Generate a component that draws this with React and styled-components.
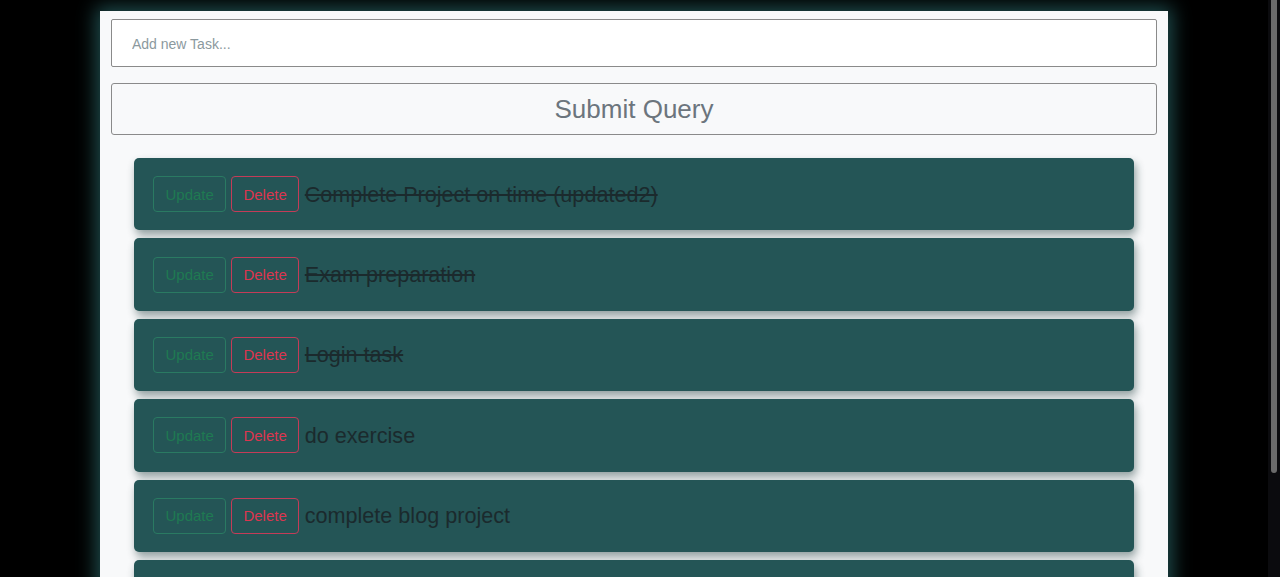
import React from 'react';
import styled, { createGlobalStyle } from 'styled-components';

const GlobalStyle = createGlobalStyle`
    html, body {
        margin: 0;
        padding: 0;
        background: #000;
        overflow: hidden;
    }
    body {
        font-family: "Liberation Sans", Arial, sans-serif;
    }
`;

const Viewport = styled.div`
    display: flex;
    height: 577px;
`;
const Main = styled.div`
    flex: 1;
    overflow: hidden;
`;
const ScrollTrack = styled.div`
    width: 12px;
    background: #0b0b0e;
    padding: 0 3px;
    box-sizing: border-box;
`;
const ScrollThumb = styled.div`
    height: 473px;
    background: #6b6b6b;
    border-radius: 0 0 3px 3px;
`;
const Page = styled.div`
    padding: 11px 100px 48px;
`;
const Panel = styled.div`
    background: #f8f9fa;
    padding: 8px 11px 24px;
    box-shadow: 0 0 18px 4px #1f4e4f;
`;
const Form = styled.form`
    display: flex;
    flex-direction: column;
    gap: 16px;
`;
const TaskInput = styled.input`
    height: 48px;
    box-sizing: border-box;
    padding: 2px 20px 0;
    border: 1px solid #8a8a8a;
    border-radius: 2px;
    background: #fff;
    font-family: "Liberation Sans", Arial, sans-serif;
    font-size: 14px;
    color: #333;
    outline: none;
    &::placeholder {
        color: #8b999e;
    }
`;
const SubmitButton = styled.button`
    height: 52px;
    border: 1px solid #8a8a8a;
    border-radius: 3px;
    background: #f8f9fa;
    font-family: "Liberation Sans", Arial, sans-serif;
    font-size: 26px;
    color: #6c757d;
    cursor: pointer;
`;
const List = styled.ul`
    list-style: none;
    margin: 23px auto 0;
    padding: 0;
    width: 1000px;
    display: flex;
    flex-direction: column;
    gap: 8px;
`;
const Item = styled.li`
    height: 72.4px;
    box-sizing: border-box;
    padding: 0 19px;
    display: flex;
    align-items: center;
    gap: 5px;
    background: #245556;
    border-radius: 5px;
    box-shadow: 2px 5px 8px rgba(20, 50, 50, 0.45);
`;
const ActionButton = styled.button`
    height: 36px;
    padding: 0 ${props => (props.danger ? '11px' : '11.5px')};
    background: transparent;
    border: 1px solid ${props => (props.danger ? '#c43c58' : '#2a7a62')};
    border-radius: 4px;
    font-family: "Liberation Sans", Arial, sans-serif;
    font-size: 15px;
    color: ${props => (props.danger ? '#dc354f' : '#1f7a52')};
    cursor: pointer;
`;
const TaskText = styled.span`
    padding-top: 1px;
    margin-left: 1px;
    font-size: 21.6px;
    color: #1b2a2d;
    text-decoration: ${props => (props.done ? 'line-through' : 'none')};
`;

const tasks = [
    { id: 1, text: 'Complete Project on time (updated2)', done: true },
    { id: 2, text: 'Exam preparation', done: true },
    { id: 3, text: 'Login task', done: true },
    { id: 4, text: 'do exercise', done: false },
    { id: 5, text: 'complete blog project', done: false },
    { id: 6, text: 'read a book', done: false },
];

const App = () =>
    <>
        <GlobalStyle />
        <Viewport>
            <Main>
                <Page>
                    <Panel>
                        <Form onSubmit={e => e.preventDefault()}>
                            <TaskInput type="text" placeholder="Add new Task..." />
                            <SubmitButton type="submit">Submit Query</SubmitButton>
                        </Form>
                        <List>
                            {tasks.map(task =>
                                <Item key={task.id}>
                                    <ActionButton>Update</ActionButton>
                                    <ActionButton danger>Delete</ActionButton>
                                    <TaskText done={task.done}>{task.text}</TaskText>
                                </Item>
                            )}
                        </List>
                    </Panel>
                </Page>
            </Main>
            <ScrollTrack>
                <ScrollThumb />
            </ScrollTrack>
        </Viewport>
    </>

export default App;
